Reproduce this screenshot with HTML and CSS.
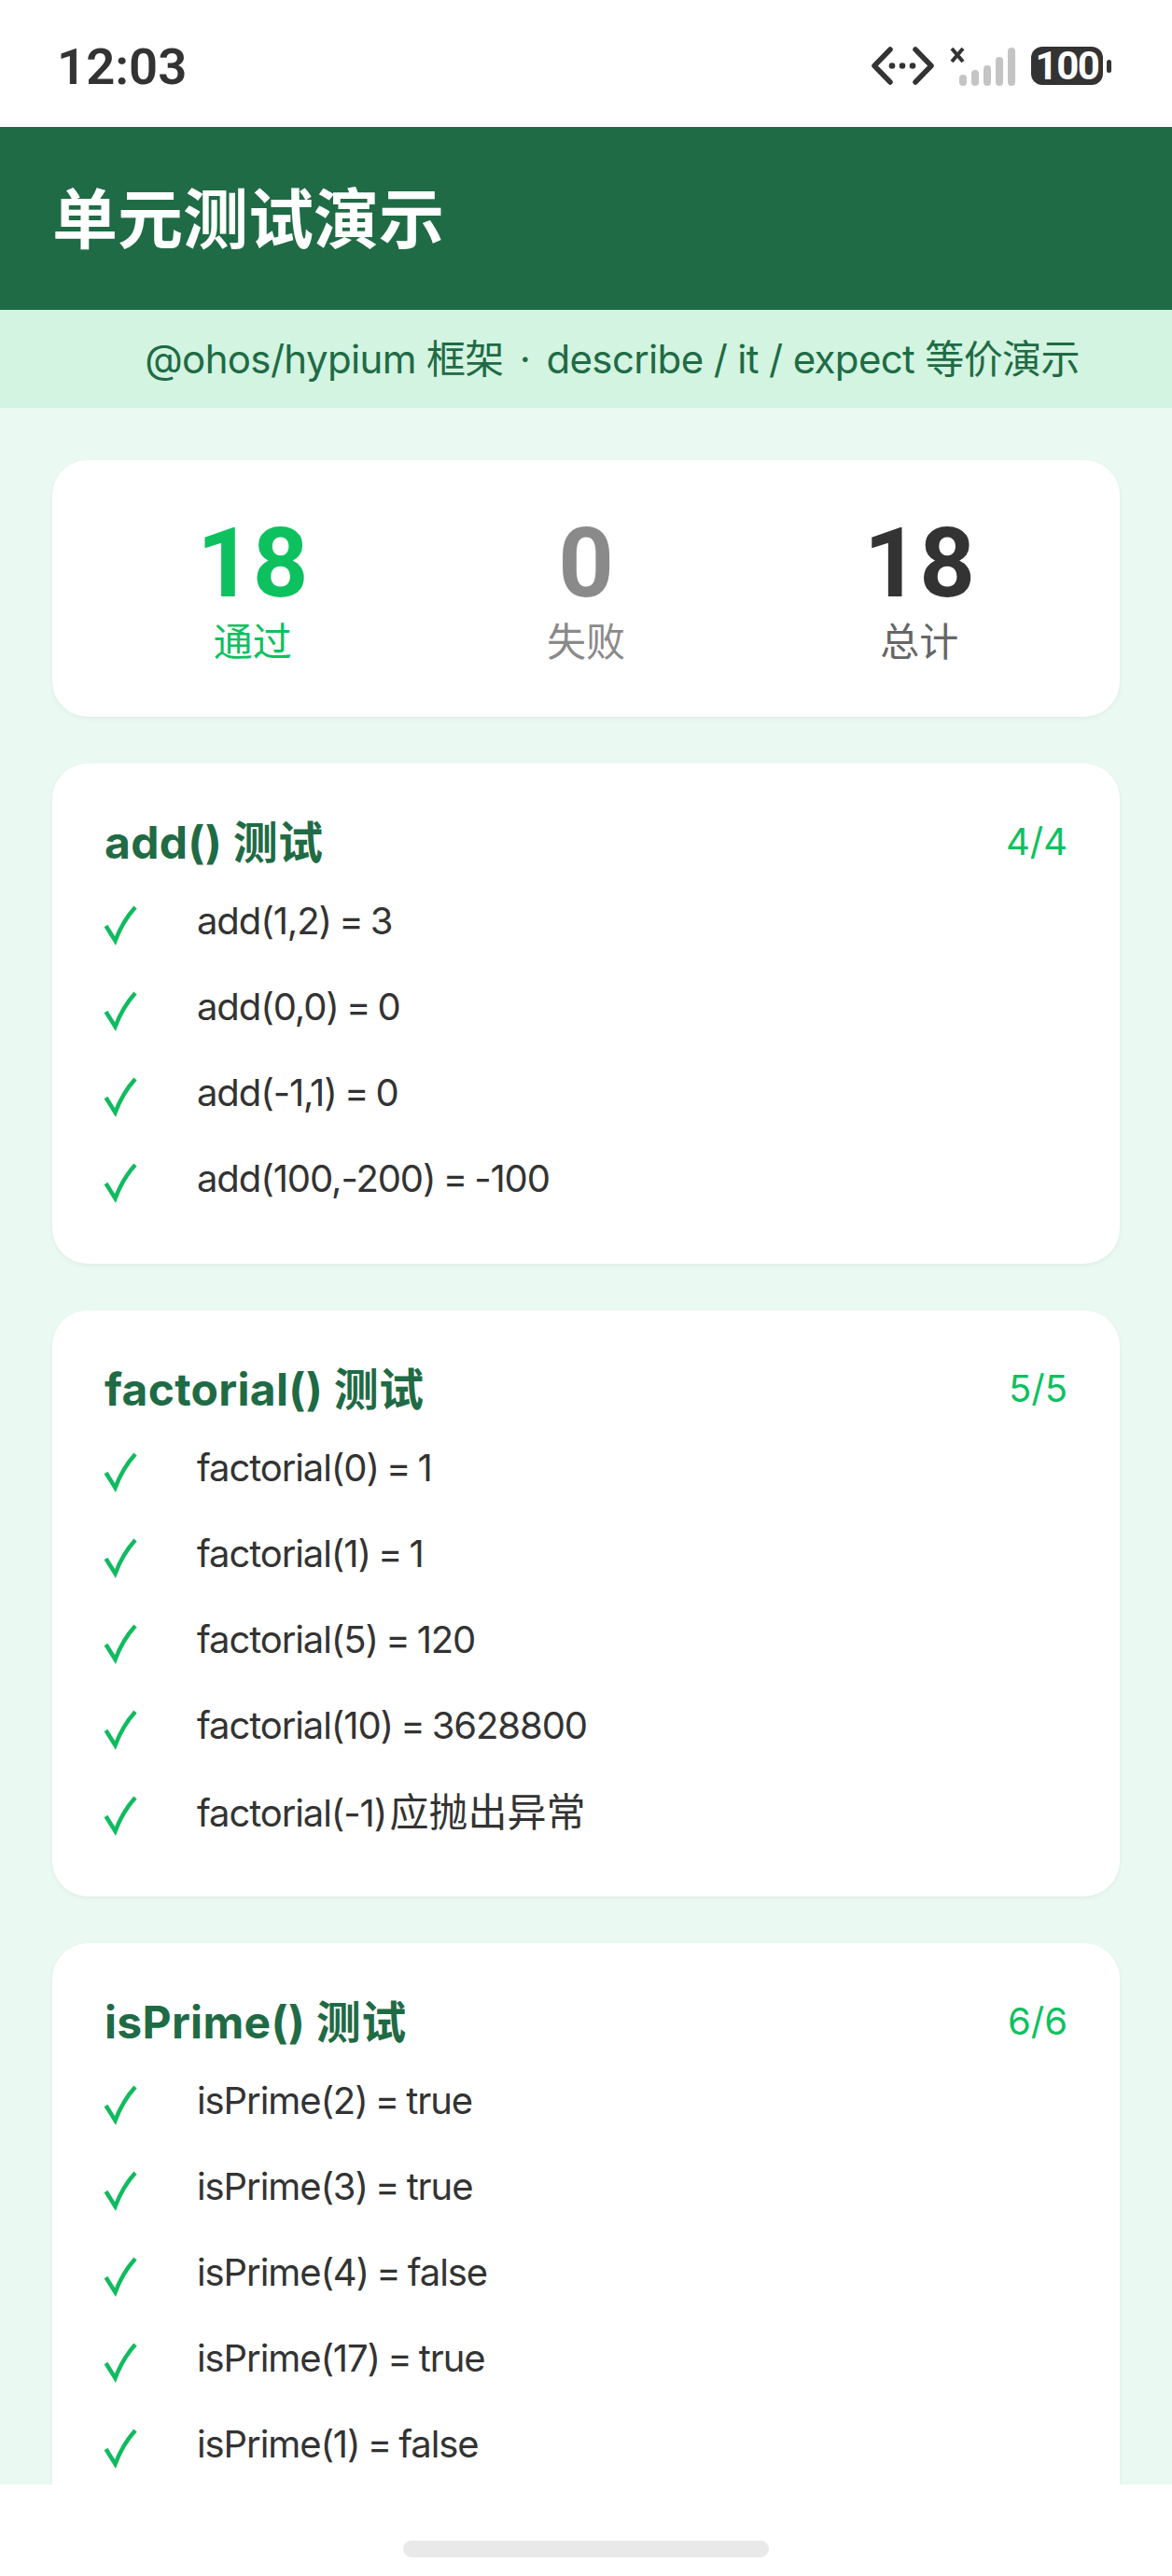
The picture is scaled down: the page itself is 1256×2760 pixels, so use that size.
FILE: index.html
```html
<!DOCTYPE html>
<html lang="zh-CN">
<head>
<meta charset="utf-8">
<title>单元测试演示</title>
<link rel="stylesheet" href="styles.css">
</head>
<body>
<div class="screen">
  <div class="status">
    <span class="time">12:03</span>
    <div class="status-icons">
      <svg class="ic-net" width="67" height="41" viewBox="0 0 67 41"><path d="M20 3 3 20.5 20 38M47 3l17 17.5L47 38" fill="none" stroke="#333" stroke-width="5.5" stroke-linecap="round" stroke-linejoin="round"/><circle cx="22" cy="20.5" r="3.3" fill="#333"/><circle cx="33" cy="20.5" r="3.3" fill="#333"/><circle cx="44" cy="20.5" r="3.3" fill="#333"/></svg>
      <svg class="ic-sig" width="70" height="42" viewBox="0 0 70 42"><path d="M2 2l12 14M14 2 2 16" fill="none" stroke="#333" stroke-width="4"/><g fill="#c4c4c4"><rect x="10" y="30" width="8" height="12" rx="4"/><rect x="23" y="25" width="8" height="17" rx="4"/><rect x="36" y="20" width="8" height="22" rx="4"/><rect x="49" y="11" width="8" height="31" rx="4"/><rect x="62" y="1" width="8" height="41" rx="4"/></g></svg>
      <div class="battery"><span class="batt-body">100</span><span class="batt-tip"></span></div>
    </div>
  </div>
  <header class="header"><h1>单元测试演示</h1></header>
  <div class="band"><span>@ohos/hypium 框架 <span class="dot">·</span> describe / it / expect 等价演示</span></div>
  <main class="content">
    <section class="card stats">
      <div class="stat pass"><div class="num">18</div><div class="lbl">通过</div></div>
      <div class="stat fail"><div class="num">0</div><div class="lbl">失败</div></div>
      <div class="stat total"><div class="num">18</div><div class="lbl">总计</div></div>
    </section>
    <section class="card suite">
      <div class="suite-head"><h2>add() 测试</h2><span class="count">4/4</span></div>
      <div class="row"><svg class="check" viewBox="0 0 36 40"><path d="M1.5 22 11.5 38C16 26 23 13 33 2" /></svg><span>add(1,2) = 3</span></div>
      <div class="row"><svg class="check" viewBox="0 0 36 40"><path d="M1.5 22 11.5 38C16 26 23 13 33 2" /></svg><span>add(0,0) = 0</span></div>
      <div class="row"><svg class="check" viewBox="0 0 36 40"><path d="M1.5 22 11.5 38C16 26 23 13 33 2" /></svg><span>add(-1,1) = 0</span></div>
      <div class="row"><svg class="check" viewBox="0 0 36 40"><path d="M1.5 22 11.5 38C16 26 23 13 33 2" /></svg><span>add(100,-200) = -100</span></div>
    </section>
    <section class="card suite">
      <div class="suite-head"><h2>factorial() 测试</h2><span class="count">5/5</span></div>
      <div class="row"><svg class="check" viewBox="0 0 36 40"><path d="M1.5 22 11.5 38C16 26 23 13 33 2" /></svg><span>factorial(0) = 1</span></div>
      <div class="row"><svg class="check" viewBox="0 0 36 40"><path d="M1.5 22 11.5 38C16 26 23 13 33 2" /></svg><span>factorial(1) = 1</span></div>
      <div class="row"><svg class="check" viewBox="0 0 36 40"><path d="M1.5 22 11.5 38C16 26 23 13 33 2" /></svg><span>factorial(5) = 120</span></div>
      <div class="row"><svg class="check" viewBox="0 0 36 40"><path d="M1.5 22 11.5 38C16 26 23 13 33 2" /></svg><span>factorial(10) = 3628800</span></div>
      <div class="row"><svg class="check" viewBox="0 0 36 40"><path d="M1.5 22 11.5 38C16 26 23 13 33 2" /></svg><span class="mixed">factorial(-1) <span class="cjk">应抛出异常</span></span></div>
    </section>
    <section class="card suite">
      <div class="suite-head"><h2>isPrime() 测试</h2><span class="count">6/6</span></div>
      <div class="row"><svg class="check" viewBox="0 0 36 40"><path d="M1.5 22 11.5 38C16 26 23 13 33 2" /></svg><span>isPrime(2) = true</span></div>
      <div class="row"><svg class="check" viewBox="0 0 36 40"><path d="M1.5 22 11.5 38C16 26 23 13 33 2" /></svg><span>isPrime(3) = true</span></div>
      <div class="row"><svg class="check" viewBox="0 0 36 40"><path d="M1.5 22 11.5 38C16 26 23 13 33 2" /></svg><span>isPrime(4) = false</span></div>
      <div class="row"><svg class="check" viewBox="0 0 36 40"><path d="M1.5 22 11.5 38C16 26 23 13 33 2" /></svg><span>isPrime(17) = true</span></div>
      <div class="row"><svg class="check" viewBox="0 0 36 40"><path d="M1.5 22 11.5 38C16 26 23 13 33 2" /></svg><span>isPrime(1) = false</span></div>
    </section>
  </main>
  <div class="navbar"><div class="handle"></div></div>
</div>
</body>
</html>
```

FILE: styles.css
```css
* { box-sizing: border-box; }
html, body { margin: 0; padding: 0; }
body { font-family: "Inter", "Noto Sans CJK SC", sans-serif; background: #fff; }
.screen { width: 1256px; height: 2760px; display: flex; flex-direction: column; overflow: hidden; }

.status { height: 136px; flex: none; background: #fff; display: flex; align-items: center; justify-content: space-between; padding: 5px 65px 0 61px; }
.time { font-family: "Roboto", sans-serif; font-size: 54.5px; font-weight: 600; color: #333; }
.status-icons { display: flex; align-items: center; gap: 17px; }
.battery { display: flex; align-items: center; gap: 4px; }
.batt-body { width: 77px; height: 41px; border-radius: 12px; background: #333; color: #fff; font-family: "Roboto", sans-serif; font-weight: 700; font-size: 42px; line-height: 41px; text-align: center; letter-spacing: -1.5px; }
.batt-tip { width: 5px; height: 14px; border-radius: 3px; background: #333; }

.header { height: 196px; flex: none; background: #1f6b45; display: flex; align-items: center; padding: 0 56px 8px; }
.header h1 { margin: 0; font-family: "Noto Sans CJK SC", sans-serif; font-size: 70px; font-weight: 700; color: #fff; }

.band { height: 105px; flex: none; background: #d2f4e1; color: #1f6b45; font-size: 42px; letter-spacing: -0.65px; display: flex; align-items: center; justify-content: center; padding: 0 0 6px 56px; }
.dot { margin: 0 6px; }

.content { flex: 1; min-height: 0; overflow: hidden; background: #eaf9f2; padding: 56px 56px 0; display: flex; flex-direction: column; gap: 50px; }
.card { flex: none; background: #fff; border-radius: 38px; box-shadow: 0 2px 5px rgba(0,0,0,0.05); }

.stats { height: 275px; display: grid; grid-template-columns: repeat(3, 1fr); padding: 5px 36px 0; align-content: center; }
.stat { text-align: center; }
.num { font-family: "Roboto", sans-serif; font-size: 104px; font-weight: 700; line-height: 104px; }
.lbl { font-size: 42px; line-height: 52px; margin-top: 6px; }
.pass { color: #0dc15f; }
.fail { color: #8a8a8a; }
.total .num { color: #333; }
.total .lbl { color: #666; }

.suite { padding: 50px 56px 46px; }
.suite-head { display: flex; justify-content: space-between; align-items: center; height: 64px; margin-bottom: 8px; }
.suite-head h2 { margin: 0 0 2px; font-size: 48px; font-weight: 700; color: #1f6b45; letter-spacing: 0.3px; }
.count { font-size: 40px; color: #0dc15f; margin-top: 3px; }
.row { height: 92px; display: flex; align-items: center; font-size: 40px; letter-spacing: -1.1px; word-spacing: -2px; color: #333; }
.row span { margin-left: 63px; }
.row .mixed { margin-bottom: 4px; }
.row .cjk { margin-left: -5px; font-size: 42px; letter-spacing: 0; }
.check { width: 36px; height: 40px; flex: none; margin-top: 8px; fill: none; stroke: #10bb5f; stroke-width: 4.5; overflow: visible; }

.navbar { height: 98px; flex: none; background: #fff; display: flex; justify-content: center; padding-top: 60px; }
.handle { width: 392px; height: 18px; border-radius: 9px; background: #e9e9e9; }
```
